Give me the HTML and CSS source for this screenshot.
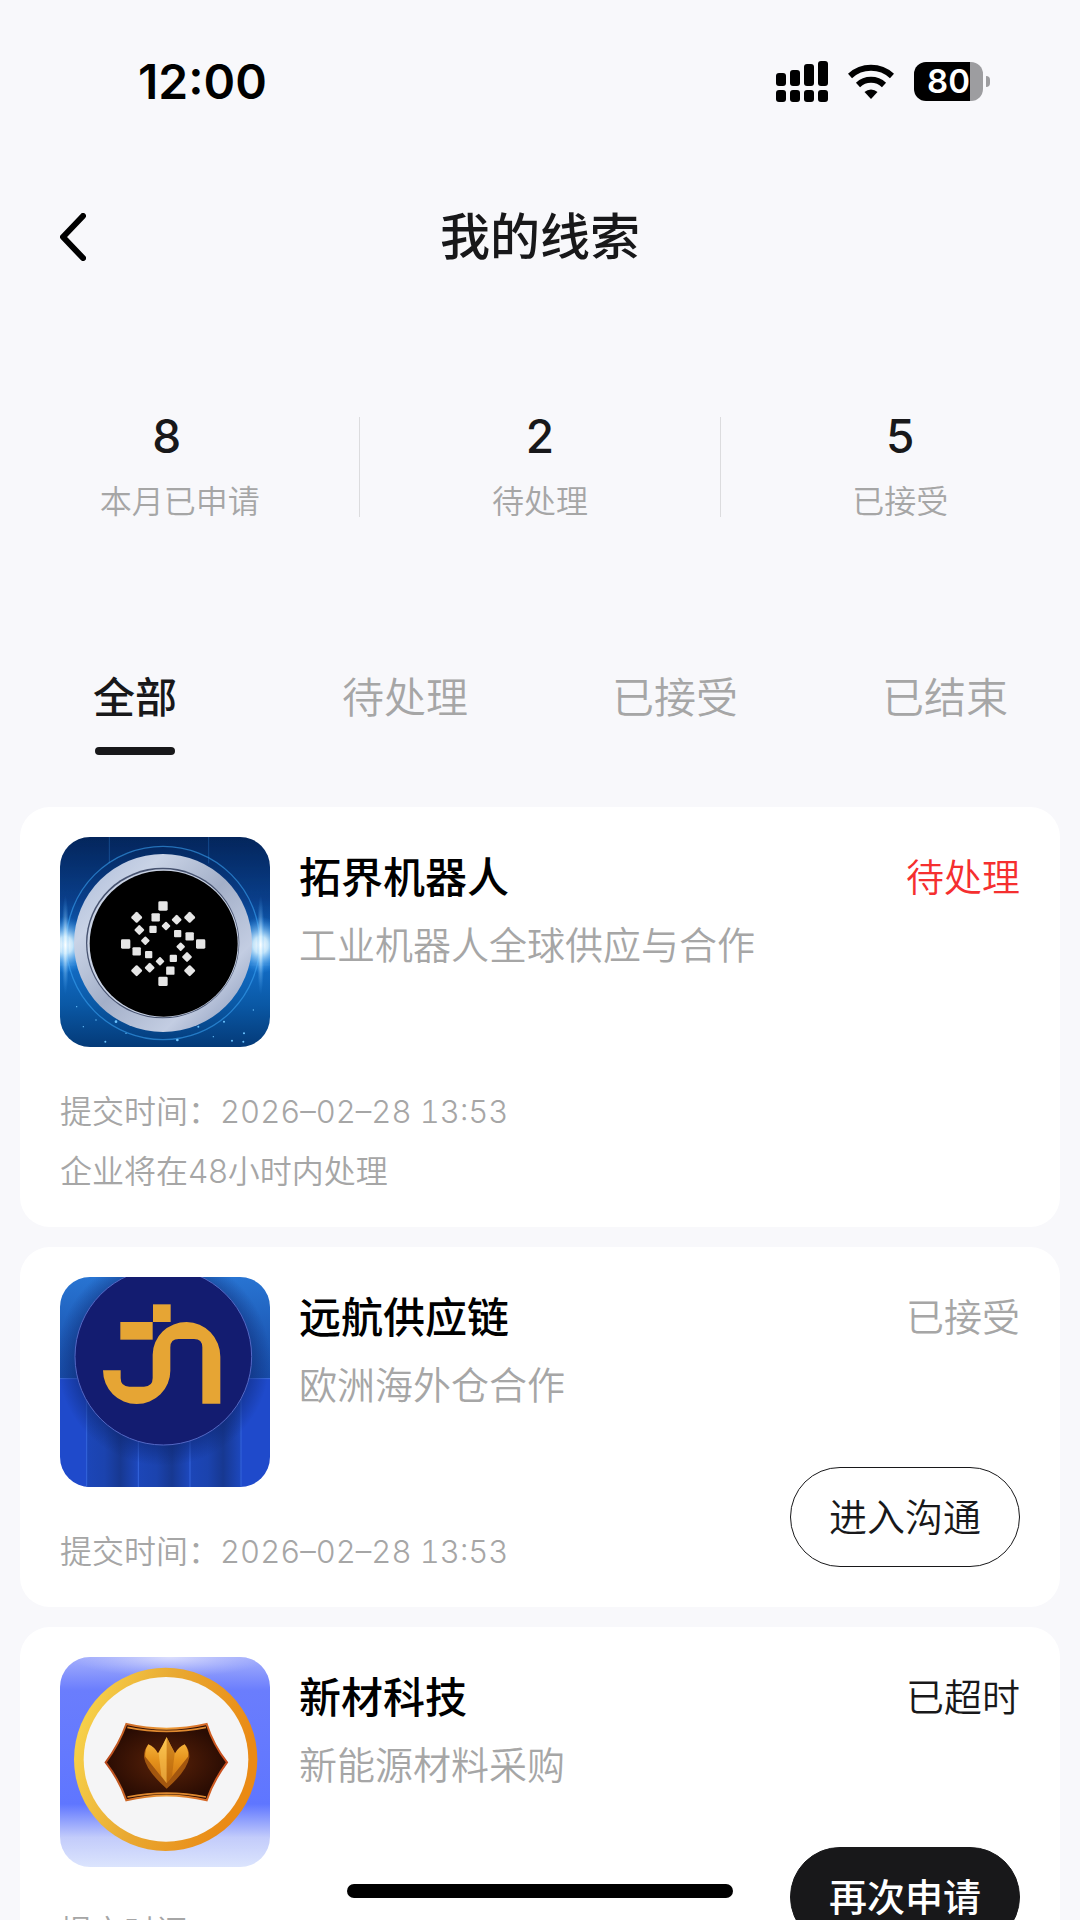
FILE: index.html
```html
<!DOCTYPE html>
<html lang="zh-CN">
<head>
    <meta charset="UTF-8">
    <meta name="viewport" content="width=device-width, initial-scale=1.0">
    <title>我的线索</title>
    <link rel="stylesheet" href="styles.css">
</head>
<body>
    <div class="status-bar">
        <span class="time">12:00</span>
        <div class="status-icons">
            <svg class="signal" width="52" height="41" viewBox="0 0 52 41">
                <rect x="0" y="12" width="10" height="13" rx="3"/>
                <rect x="14" y="9" width="10" height="16" rx="3"/>
                <rect x="28" y="3" width="10" height="22" rx="3"/>
                <rect x="42" y="0" width="10" height="25" rx="3"/>
                <rect x="0" y="29" width="10" height="12" rx="3"/>
                <rect x="14" y="29" width="10" height="12" rx="3"/>
                <rect x="28" y="29" width="10" height="12" rx="3"/>
                <rect x="42" y="29" width="10" height="12" rx="3"/>
            </svg>
            <svg class="wifi" width="46" height="36" viewBox="0 0 46 36">
                <path d="M2 13A31 31 0 0 1 44 13" fill="none" stroke="#000" stroke-width="6"/>
                <path d="M10 22A19 19 0 0 1 36 22" fill="none" stroke="#000" stroke-width="6"/>
                <path d="M23 36L16.5 29A9.5 9.5 0 0 1 29.5 29Z"/>
            </svg>
            <div class="battery"><span class="battery-level">80</span></div>
        </div>
    </div>

    <header class="header">
        <button class="back" aria-label="返回">
            <svg width="26" height="48" viewBox="0 0 26 48">
                <path d="M23 3L3 24L23 45" fill="none" stroke="#000" stroke-width="6" stroke-linecap="round" stroke-linejoin="round"/>
            </svg>
        </button>
        <h1>我的线索</h1>
    </header>

    <section class="stats">
        <div class="stat">
            <span class="stat-value">8</span>
            <span class="stat-label">本月已申请</span>
        </div>
        <div class="stat">
            <span class="stat-value">2</span>
            <span class="stat-label">待处理</span>
        </div>
        <div class="stat">
            <span class="stat-value">5</span>
            <span class="stat-label">已接受</span>
        </div>
    </section>

    <nav class="tabs">
        <button class="tab active">全部</button>
        <button class="tab">待处理</button>
        <button class="tab">已接受</button>
        <button class="tab">已结束</button>
    </nav>

    <main class="leads">
        <article class="card">
            <div class="card-main">
                <div class="company">
                    <svg class="logo" viewBox="60 51 630 630">
                        <defs>
                            <linearGradient id="space" x1="0" y1="0" x2="0" y2="1">
                                <stop offset="0" stop-color="#04265c"/>
                                <stop offset="0.3" stop-color="#0a3f8a"/>
                                <stop offset="0.55" stop-color="#1573cf"/>
                                <stop offset="0.8" stop-color="#0a58a5"/>
                                <stop offset="1" stop-color="#043a78"/>
                            </linearGradient>
                            <linearGradient id="steel" x1="0" y1="0" x2="1" y2="1">
                                <stop offset="0" stop-color="#a9b8d6"/>
                                <stop offset="0.25" stop-color="#c9d3e6"/>
                                <stop offset="0.5" stop-color="#a3afc8"/>
                                <stop offset="0.75" stop-color="#c3cde2"/>
                                <stop offset="1" stop-color="#7f8fb2"/>
                            </linearGradient>
                            <radialGradient id="flare">
                                <stop offset="0" stop-color="#fff"/>
                                <stop offset="0.3" stop-color="#d8f2ff" stop-opacity="0.9"/>
                                <stop offset="1" stop-color="#3aa5ff" stop-opacity="0"/>
                            </radialGradient>
                            <rect id="dot" x="-14" y="-14" width="28" height="28" rx="4"/>
                        </defs>
                        <rect x="60" y="51" width="630" height="630" fill="url(#space)"/>
                        <path d="M208 51V130M506 51V130M60 435H690" stroke="#2f7fd0" stroke-width="2" opacity="0.6"/>
                        <circle cx="369" cy="369" r="290" fill="none" stroke="#39a0f0" stroke-width="4" opacity="0.6"/>
                        <ellipse cx="76" cy="375" rx="75" ry="85" fill="url(#flare)"/>
                        <ellipse cx="662" cy="375" rx="75" ry="85" fill="url(#flare)"/>
                        <ellipse cx="76" cy="375" rx="12" ry="150" fill="url(#flare)" opacity="0.6"/>
                        <ellipse cx="662" cy="375" rx="12" ry="150" fill="url(#flare)" opacity="0.6"/>
                        <g fill="#6cc4ff">
                            <circle cx="228" cy="605" r="4"/><circle cx="168" cy="600" r="2"/><circle cx="196" cy="665" r="3"/>
                            <circle cx="258" cy="640" r="2"/><circle cx="412" cy="660" r="4"/><circle cx="475" cy="620" r="3"/>
                            <circle cx="520" cy="650" r="2"/><circle cx="552" cy="605" r="3"/><circle cx="576" cy="662" r="3"/>
                            <circle cx="612" cy="640" r="3"/><circle cx="610" cy="665" r="3"/><circle cx="640" cy="570" r="2"/>
                            <circle cx="110" cy="560" r="2"/><circle cx="130" cy="620" r="2"/>
                        </g>
                        <circle cx="369" cy="369" r="267" fill="url(#steel)"/>
                        <ellipse cx="368" cy="369" rx="230" ry="226" fill="#46526f"/>
                        <ellipse cx="369" cy="370" rx="227" ry="222" fill="#c9d2e4"/>
                        <ellipse cx="371" cy="371" rx="222" ry="219" fill="#000"/>
                        <g fill="#e6e6e6">
                            <use href="#dot" transform="translate(369 258)"/>
                            <use href="#dot" transform="translate(257 372)"/>
                            <use href="#dot" transform="translate(482 372)"/>
                            <use href="#dot" transform="translate(369 484)"/>
                            <use href="#dot" transform="translate(290 292) rotate(45) scale(0.9)"/>
                            <use href="#dot" transform="translate(449 292) rotate(45) scale(0.9)"/>
                            <use href="#dot" transform="translate(290 452) rotate(45) scale(0.9)"/>
                            <use href="#dot" transform="translate(449 452) rotate(45) scale(0.9)"/>
                            <use href="#dot" transform="translate(347 292) scale(0.9)"/>
                            <use href="#dot" transform="translate(449 349) scale(0.9)"/>
                            <use href="#dot" transform="translate(290 394) scale(0.9)"/>
                            <use href="#dot" transform="translate(391 452) scale(0.9)"/>
                            <use href="#dot" transform="translate(410 299) rotate(45) scale(0.8)"/>
                            <use href="#dot" transform="translate(298 330) rotate(45) scale(0.8)"/>
                            <use href="#dot" transform="translate(441 411) rotate(45) scale(0.8)"/>
                            <use href="#dot" transform="translate(329 443) rotate(45) scale(0.8)"/>
                            <use href="#dot" transform="translate(339 328) scale(0.78)"/>
                            <use href="#dot" transform="translate(413 341) scale(0.78)"/>
                            <use href="#dot" transform="translate(326 404) scale(0.78)"/>
                            <use href="#dot" transform="translate(400 415) scale(0.78)"/>
                            <use href="#dot" transform="translate(378 318) rotate(45) scale(0.7)"/>
                            <use href="#dot" transform="translate(316 362) rotate(45) scale(0.7)"/>
                            <use href="#dot" transform="translate(422 380) rotate(45) scale(0.7)"/>
                            <use href="#dot" transform="translate(360 424) rotate(45) scale(0.7)"/>
                        </g>
                    </svg>
                    <div class="company-text">
                        <h2>拓界机器人</h2>
                        <p class="desc">工业机器人全球供应与合作</p>
                    </div>
                </div>
                <div class="meta">
                    <p>提交时间：<time datetime="2026-02-28T13:53">2026–02–28 13:53</time></p>
                    <p>企业将在48小时内处理</p>
                </div>
            </div>
            <div class="card-side">
                <span class="state pending">待处理</span>
            </div>
        </article>

        <article class="card">
            <div class="card-main">
                <div class="company">
                    <svg class="logo" viewBox="60 51 630 630">
                        <defs>
                            <linearGradient id="sky" x1="0" y1="0" x2="0" y2="1">
                                <stop offset="0" stop-color="#2874d2"/>
                                <stop offset="1" stop-color="#174aa5"/>
                            </linearGradient>
                            <linearGradient id="panel" x1="0" y1="0" x2="1" y2="0">
                                <stop offset="0" stop-color="#1c46b8"/>
                                <stop offset="0.35" stop-color="#1b43ae"/>
                                <stop offset="0.65" stop-color="#173891"/>
                                <stop offset="1" stop-color="#1d48be"/>
                            </linearGradient>
                            <radialGradient id="shade">
                                <stop offset="0.8" stop-color="#0b2369" stop-opacity="0.5"/>
                                <stop offset="1" stop-color="#0b2369" stop-opacity="0"/>
                            </radialGradient>
                        </defs>
                        <rect x="60" y="51" width="630" height="305" fill="url(#sky)"/>
                        <rect x="60" y="356" width="630" height="325" fill="#1f4acb"/>
                        <rect x="140" y="356" width="155" height="325" fill="url(#panel)"/>
                        <rect x="295" y="356" width="155" height="325" fill="url(#panel)"/>
                        <rect x="450" y="356" width="153" height="325" fill="url(#panel)"/>
                        <path d="M60 356H690M140 356V681M295 356V681M450 356V681M603 356V681" stroke="#3565dc" stroke-width="3"/>
                        <circle cx="370" cy="298" r="320" fill="url(#shade)"/>
                        <circle cx="370" cy="290" r="265" fill="#131c70" stroke="#5468c4" stroke-width="3"/>
                        <g fill="#e6a534">
                            <rect x="339" y="133" width="53" height="53"/>
                            <rect x="241" y="186" width="97" height="53"/>
                            <path d="M189 331H242V354Q242 380 268 380H312Q338 380 338 354V284A102 98 0 0 1 440 186A102 104 0 0 1 541 290V431H487V262Q487 237 462 237H416Q391 237 391 262V332A101 100 0 0 1 290 432A101 101 0 0 1 189 331Z"/>
                        </g>
                    </svg>
                    <div class="company-text">
                        <h2>远航供应链</h2>
                        <p class="desc">欧洲海外仓合作</p>
                    </div>
                </div>
                <div class="meta">
                    <p>提交时间：<time datetime="2026-02-28T13:53">2026–02–28 13:53</time></p>
                </div>
            </div>
            <div class="card-side">
                <span class="state">已接受</span>
                <button class="action">进入沟通</button>
            </div>
        </article>

        <article class="card">
            <div class="card-main">
                <div class="company">
                    <svg class="logo" viewBox="60 51 630 630">
                        <defs>
                            <linearGradient id="haze" x1="0" y1="0" x2="0" y2="1">
                                <stop offset="0" stop-color="#a3aefc"/>
                                <stop offset="0.16" stop-color="#6a7dfd"/>
                                <stop offset="0.7" stop-color="#5f76ff"/>
                                <stop offset="0.86" stop-color="#c3ccfb"/>
                                <stop offset="1" stop-color="#dbe4fd"/>
                            </linearGradient>
                            <radialGradient id="glow">
                                <stop offset="0" stop-color="#dcdffd"/>
                                <stop offset="1" stop-color="#b8c0fc" stop-opacity="0"/>
                            </radialGradient>
                            <linearGradient id="gold" x1="0" y1="0" x2="1" y2="0.3">
                                <stop offset="0" stop-color="#fbdc50"/>
                                <stop offset="0.5" stop-color="#e9aa33"/>
                                <stop offset="1" stop-color="#ea8a14"/>
                            </linearGradient>
                            <radialGradient id="brown">
                                <stop offset="0" stop-color="#5a2208"/>
                                <stop offset="1" stop-color="#2a0c03"/>
                            </radialGradient>
                            <linearGradient id="copper" x1="0" y1="0" x2="1" y2="0">
                                <stop offset="0" stop-color="#b8481c"/>
                                <stop offset="0.5" stop-color="#f0a03a"/>
                                <stop offset="1" stop-color="#c5481c"/>
                            </linearGradient>
                            <linearGradient id="leaf" x1="0" y1="0" x2="0" y2="1">
                                <stop offset="0" stop-color="#fbbf45"/>
                                <stop offset="0.5" stop-color="#e5921c"/>
                                <stop offset="1" stop-color="#c8700f"/>
                            </linearGradient>
                        </defs>
                        <rect x="60" y="51" width="630" height="630" fill="url(#haze)"/>
                        <ellipse cx="390" cy="51" rx="300" ry="60" fill="url(#glow)"/>
                        <circle cx="377" cy="358" r="275" fill="url(#gold)"/>
                        <circle cx="378" cy="358" r="247" fill="#f5f5f6"/>
                        <path d="M259 252Q380 280 500 252Q520 315 561 367Q520 422 500 481Q380 452 259 481Q238 420 197 367Q238 312 259 252Z" fill="url(#brown)" stroke="url(#copper)" stroke-width="6"/>
                        <path d="M262 262Q380 286 498 262M262 471Q380 448 498 471" fill="none" stroke="#e08a30" stroke-width="5"/>
                        <path d="M325 313Q311 330 312 352Q318 392 380 446Q442 392 448 352Q449 330 434 313L380 400Z" fill="#a2560f"/>
                        <path d="M325 313Q313 330 316 350L380 430L444 350Q447 330 434 313Q416 320 405 340L392 315L380 291L368 315L354 340Q344 321 325 313Z" fill="url(#leaf)"/>
                        <path d="M380 291L356 340L364 408L380 430Z" fill="#ffd468" opacity="0.45"/>
                        <path d="M380 291L404 340L396 408L380 430Z" fill="#a85c0c" opacity="0.45"/>
                    </svg>
                    <div class="company-text">
                        <h2>新材科技</h2>
                        <p class="desc">新能源材料采购</p>
                    </div>
                </div>
                <div class="meta">
                    <p>提交时间：<time datetime="2026-02-28T13:53">2026–02–28 13:53</time></p>
                </div>
            </div>
            <div class="card-side">
                <span class="state timeout">已超时</span>
                <button class="action primary">再次申请</button>
            </div>
        </article>
    </main>

    <div class="home-indicator"></div>
</body>
</html>
```
FILE: styles.css
```css
* {
    box-sizing: border-box;
    margin: 0;
    padding: 0;
}

body {
    display: flex;
    flex-direction: column;
    height: 100vh;
    overflow: hidden;
    background-color: #f8f8fb;
    color: #18181a;
    font-family: Inter, "Noto Sans CJK SC", sans-serif;
    font-weight: 350;
}

button {
    border: none;
    background: none;
    color: inherit;
    font: inherit;
    cursor: pointer;
}

.status-bar {
    display: flex;
    align-items: center;
    justify-content: space-between;
    flex-shrink: 0;
    height: 162px;
    padding: 0 90px 0 138px;
    color: #000;
}

.time {
    font-size: 48px;
    font-weight: 600;
}

.status-icons {
    display: flex;
    align-items: center;
    gap: 20px;
}

.battery {
    position: relative;
    width: 69px;
    height: 39px;
    margin-right: 7px;
    border-radius: 12px;
    background: linear-gradient(to right, #000 56px, #9d9da0 56px);
}

.battery::after {
    content: '';
    position: absolute;
    top: 14px;
    right: -7px;
    width: 4px;
    height: 11px;
    border-radius: 0 6px 6px 0;
    background-color: #9d9da0;
}

.battery-level {
    display: block;
    color: #fff;
    font-size: 33px;
    font-weight: 600;
    line-height: 39px;
    text-align: center;
}

.header {
    display: grid;
    grid-template-columns: 1fr auto 1fr;
    align-items: center;
    flex-shrink: 0;
    height: 148px;
    padding: 2px 60px 0;
}

.back {
    justify-self: start;
    display: flex;
}

.header h1 {
    font-size: 50px;
    font-weight: 500;
    line-height: 50px;
}

.stats {
    display: flex;
    flex-shrink: 0;
    padding: 107px 0 151px;
}

.stat {
    flex: 1;
    display: flex;
    flex-direction: column;
    align-items: center;
    justify-content: space-between;
    height: 100px;
    border-right: 1px solid #dcdcde;
}

.stat:last-child {
    border-right: none;
}

.stat-value {
    font-size: 46px;
    font-weight: 500;
    line-height: 38px;
}

.stat:first-child .stat-value {
    margin-right: 26px;
}

.stat-label {
    color: #a6a6a6;
    font-size: 32px;
    line-height: 30px;
}

.tabs {
    display: flex;
    flex-shrink: 0;
    padding-bottom: 52px;
}

.tab {
    flex: 1;
    display: flex;
    flex-direction: column;
    align-items: center;
    gap: 19px;
    color: #a6a6a6;
    font-size: 42px;
    line-height: 60px;
}

.tab::after {
    content: '';
    width: 80px;
    height: 8px;
    border-radius: 4px;
}

.tab.active {
    color: #18181a;
    font-weight: 500;
}

.tab.active::after {
    background-color: #18181a;
}

.leads {
    flex: 1;
    display: flex;
    flex-direction: column;
    gap: 20px;
    min-height: 0;
    padding: 0 20px;
    overflow-y: auto;
    scrollbar-width: none;
}

.card {
    display: flex;
    justify-content: space-between;
    flex-shrink: 0;
    padding: 30px 40px 25px;
    border-radius: 30px;
    background-color: #fff;
}

.company {
    display: flex;
    gap: 29px;
}

.logo {
    width: 210px;
    height: 210px;
    border-radius: 30px;
}

.company-text {
    padding-top: 7px;
}

.company-text h2 {
    color: #000;
    font-size: 42px;
    font-weight: 500;
    line-height: 68px;
}

.desc {
    color: #a6a6a6;
    font-size: 38px;
    line-height: 66px;
}

.meta {
    margin-top: 35px;
    color: #a6a6a6;
    font-size: 32px;
    line-height: 60px;
}

.meta time {
    font-size: 31px;
    font-variant-numeric: tabular-nums;
}

.card-side {
    display: flex;
    flex-direction: column;
    align-items: flex-end;
    justify-content: space-between;
    padding: 6px 0 15px;
}

.state {
    color: #a6a6a6;
    font-size: 38px;
    line-height: 68px;
}

.state.pending {
    color: #f52f2f;
}

.state.timeout {
    color: #18181a;
}

.action {
    width: 230px;
    height: 100px;
    border: 1px solid #18181a;
    border-radius: 50px;
    font-size: 38px;
    line-height: 38px;
}

.action.primary {
    background-color: #18181a;
    color: #fff;
    font-weight: 500;
}

.home-indicator {
    position: fixed;
    bottom: 22px;
    left: 50%;
    width: 386px;
    height: 14px;
    margin-left: -193px;
    border-radius: 7px;
    background-color: #000;
}
```
